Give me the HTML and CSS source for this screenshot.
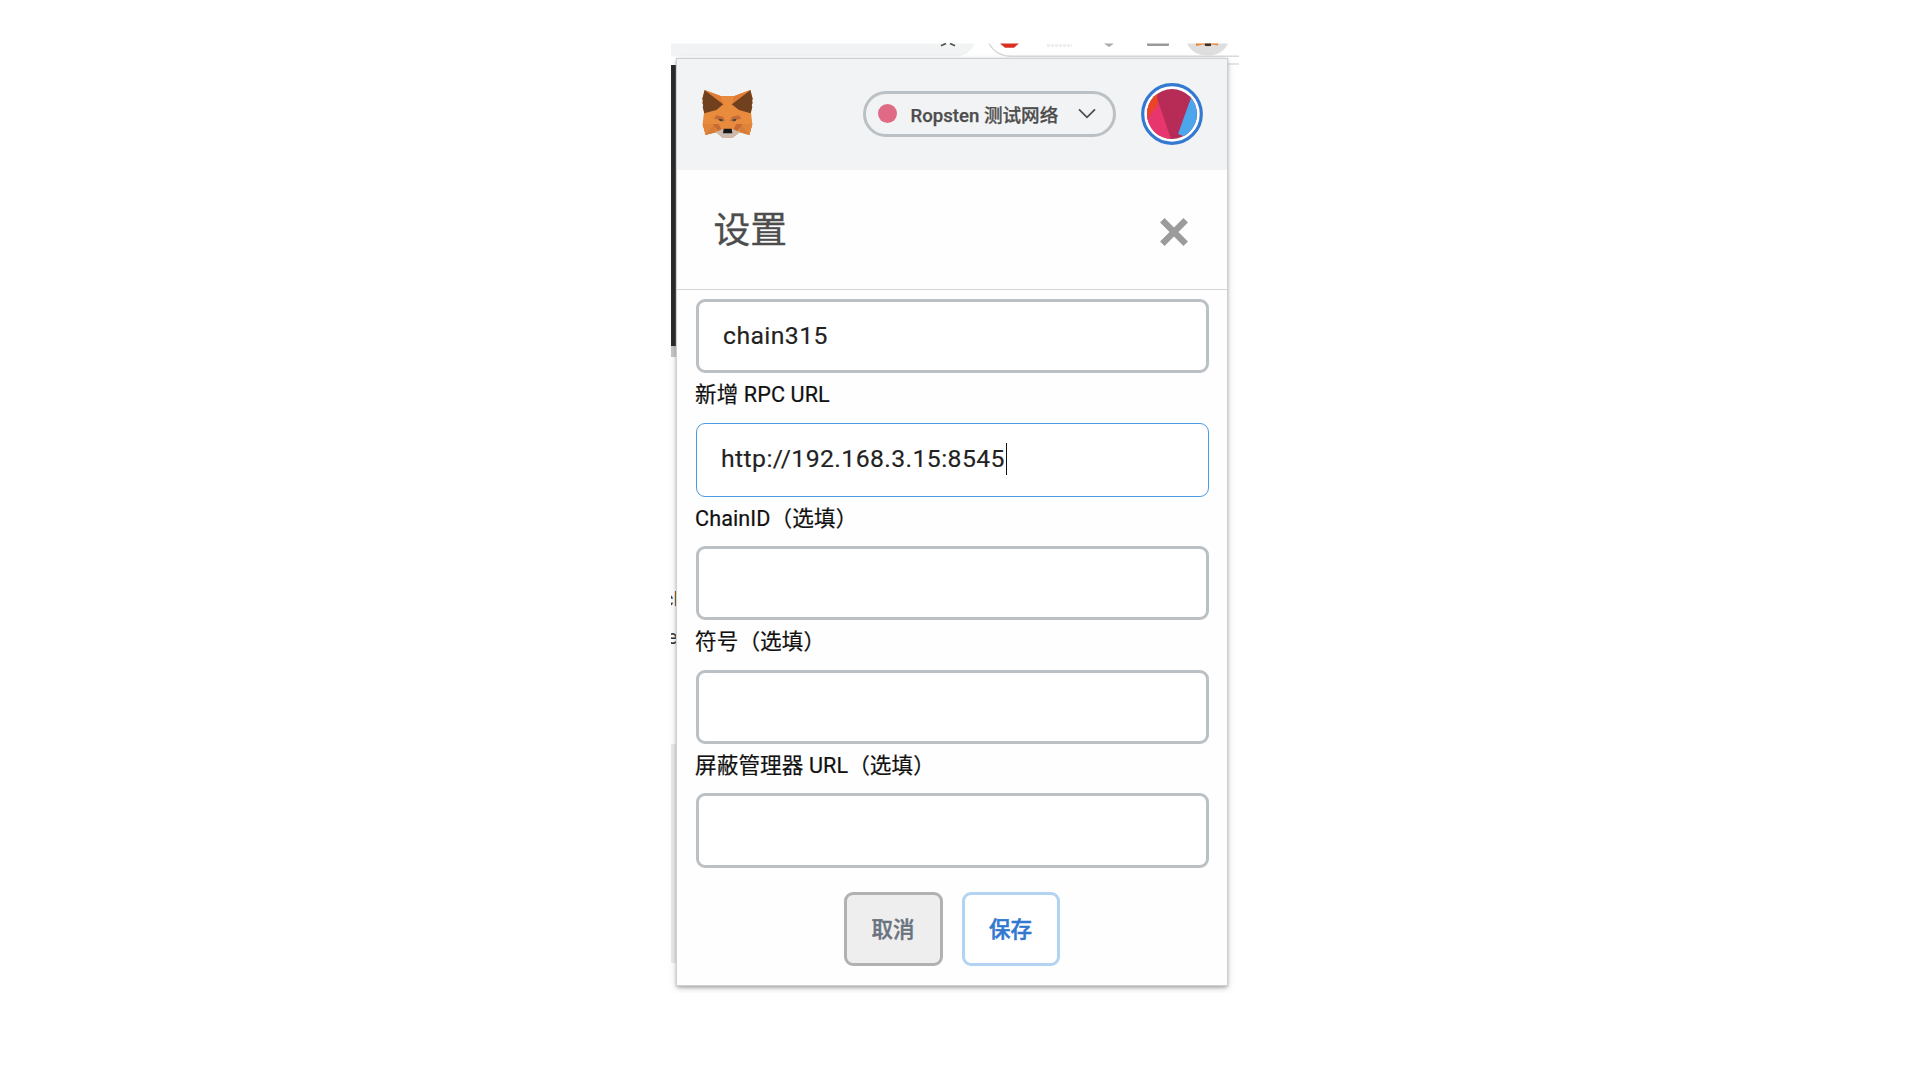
FILE: index.html
```
<!DOCTYPE html>
<html lang="zh-CN">
<head>
<meta charset="utf-8">
<title>设置</title>
<link rel="stylesheet" href="styles.css">
</head>
<body>
<div class="screen">
  <div class="backdrop" aria-hidden="true">
    <svg class="toolbar" width="568" height="22" viewBox="0 0 568 22">
      <path d="M0 .5H304Q298 13.5 283 13.5H0Z" fill="#f1f3f4"/>
      <path d="M270 2.800L275 .5M279 .5L284 2.800" stroke="#555" stroke-width="1.800"/>
      <path d="M318 .5Q325 13 340 13.300H568" fill="none" stroke="#d8d9da" stroke-width="1.500"/>
      <path d="M329 .5H348L343 4.800H334Z" fill="#d93025"/>
      <path d="M376 2.500H401" stroke="#eee" stroke-width="3" stroke-dasharray="3 1"/>
      <path d="M433 .5H443L438 4Z" fill="#aaa"/>
      <path d="M476 .5H498V2Q498 3 497 3H477Q476 3 476 2Z" fill="#999"/>
      <path d="M516 .5H557Q551 12.500 537 12.500Q522 12.500 516 .5Z" fill="#dedede"/>
      <path d="M525 .5H547V2.500L541 1.500L537 3.500L532 1.500L525 3Z" fill="#ed8936"/>
      <path d="M534 .5H540V3H534Z" fill="#333"/>
      <path d="M556 21H568" stroke="#dcdce4" stroke-width="1.500"/>
    </svg>
    <div class="page-dark"></div>
    <div class="page-fade"></div>
    <div class="page-text"><span class="line line-first">cl</span><span class="line">e</span></div>
    <div class="page-grey"></div>
  </div>

  <main class="popup">
    <header class="app-header">
      <svg class="fox" width="51" height="48" viewBox="36 31 153 144">
        <path d="M44 31L92 49H133L181 31L188 57L183 98L187 133L178 166L149 158L128 174H98L78 158L47 166L38 133L42 98L37 57Z" fill="#e88b3c"/>
        <path d="M44 31L100 74L79 91L43 101L38 82L40 77L37 70L39 63L37 57Z" fill="#70401f"/>
        <path d="M181 31L125 74L147 91L182 101L187 82L185 77L188 70L186 63L188 57Z" fill="#70401f"/>
        <path d="M44 31L92 49L100 74ZM181 31L133 49L125 74Z" fill="#df7c35"/>
        <path d="M38 133H74L78 158L47 166ZM187 133H151L149 158L178 166Z" fill="#d57c38"/>
        <path d="M38 133H74L47 166ZM187 133H151L178 166Z" fill="#e18439"/>
        <path d="M79 107L99 111L106 125L72 117ZM147 107L126 111L119 125L154 117Z" fill="#c56b38"/>
        <path d="M68 133H86L94 149L84 155ZM158 133H139L131 149L142 155Z" fill="#c76b35"/>
        <path d="M78 157L99 148H126L149 157L128 174H98Z" fill="#cbbab0"/>
        <path d="M86 117L97 119L99 125L89 124ZM139 117L129 119L127 125L137 124Z" fill="#444"/>
        <path d="M101 147H125L127 161H99Z" fill="#171717"/>
      </svg>
      <div class="network">
        <span class="network-dot"></span>
        <span class="network-name">Ropsten 测试网络</span>
        <svg class="chevron" width="18" height="11" viewBox="0 0 18 11"><path d="M1 1.300L9 9.300L17 1.300" fill="none" stroke="#4d4d4d" stroke-width="1.700"/></svg>
      </div>
      <svg class="avatar" width="62" height="62" viewBox="0 0 62 62">
        <defs><clipPath id="face"><circle cx="31" cy="31" r="25"/></clipPath></defs>
        <circle cx="31" cy="31" r="29.300" fill="#fff" stroke="#3379d2" stroke-width="3.200"/>
        <g clip-path="url(#face)">
          <path d="M0 0H62V62H0Z" fill="#b72b57"/>
          <path d="M0 0H21L15 12L32 62H0Z" fill="#e7366e"/>
          <path d="M0 0H20L16 14L17 21L0 44Z" fill="#e94524"/>
          <path d="M51 12L37 51L45 54L62 50V12Z" fill="#4da5ec"/>
        </g>
      </svg>
    </header>

    <div class="title-bar">
      <h1 class="title">设置</h1>
      <svg class="close" width="28" height="28" viewBox="0 0 28 28"><path d="M2.300 2.300L25.700 25.700M25.700 2.300L2.300 25.700" stroke="#9b9b9b" stroke-width="6.300"/></svg>
    </div>

    <section class="form">
      <div class="field">chain315</div>
      <div class="label">新增 RPC URL</div>
      <div class="field focused">http://192.168.3.15:8545<span class="caret"></span></div>
      <div class="label">ChainID（选填）</div>
      <div class="field"></div>
      <div class="label">符号（选填）</div>
      <div class="field"></div>
      <div class="label">屏蔽管理器 URL（选填）</div>
      <div class="field"></div>
      <div class="actions">
        <button class="button cancel">取消</button>
        <button class="button save">保存</button>
      </div>
    </section>
  </main>
</div>
</body>
</html>
```
FILE: styles.css
```
* { box-sizing: border-box; }
body {
  margin: 0;
  background: #fff;
  font-family: Roboto, "Noto Sans CJK SC", sans-serif;
}
.screen {
  position: relative;
  width: 568px;
  height: 950px;
  margin: 43px 0 0 671px;
  padding: 16px 0 0 5.500px;
}
.backdrop {
  position: absolute;
  inset: 0;
  display: flex;
  flex-direction: column;
}
.toolbar { flex: none; }
.page-dark { width: 6px; height: 281px; background: #2c2c2d; }
.page-fade { width: 6px; height: 11px; background: #c8c8c8; }
.page-text {
  display: flex;
  flex-direction: column;
  width: 6px;
  height: 387px;
  padding-top: 223px;
  overflow: hidden;
  color: #333;
  font-size: 20px;
  line-height: 38px;
}
.line { margin-left: -4px; }
.line-first { margin-left: -8px; }
.page-grey { width: 6px; height: 219px; background: #ebebed; }
.popup {
  position: relative;
  width: 550.500px;
  height: 926px;
  background: #fefefe;
  box-shadow: 0 0 0 1.200px #cfd0d1, 0 2px 4px rgba(0, 0, 0, .4), 0 3px 10px rgba(0, 0, 0, .12);
}
.app-header {
  display: flex;
  align-items: center;
  height: 111px;
  padding: 0 24.500px 1.500px 25.500px;
  background: #f1f3f4;
}
.network {
  display: flex;
  align-items: center;
  width: 253px;
  height: 46px;
  margin-left: auto;
  padding: 0 17px 0 12.500px;
  border: 3px solid #bbc0c5;
  border-radius: 23px;
}
.network-dot { width: 19px; height: 19px; border-radius: 50%; background: #e06a86; }
.network-name {
  margin-left: 13.500px;
  color: #4d4d4d;
  font-size: 18.600px;
  font-weight: 500;
  -webkit-text-stroke: .25px #4d4d4d;
  white-space: nowrap;
}
.chevron { margin-left: auto; }
.avatar { margin-left: 25px; }
.title-bar {
  display: flex;
  align-items: center;
  justify-content: space-between;
  height: 120px;
  padding: 4px 39.500px 0 37px;
  border-bottom: 1px solid #d3d6d9;
}
.title {
  margin: -2px 0 0;
  color: #4d4d4d;
  font-size: 36.800px;
  font-weight: 400;
  line-height: 50px;
  -webkit-text-stroke: .3px #4d4d4d;
}
.form { padding: 9px 18.500px 0 19.500px; }
.field {
  display: flex;
  align-items: center;
  height: 74.300px;
  padding: 0 0 2px 24px;
  border: 3px solid #bbc0c5;
  border-radius: 9px;
  background: #fff;
  color: #222;
  font-size: 24.800px;
  letter-spacing: .4px;
  -webkit-text-stroke: .15px #222;
}
.focused { padding-left: 24px; border: 1.500px solid #4b9be0; }
.caret { width: 1.500px; height: 32px; margin-left: 1px; background: #111; }
.label {
  height: 49.300px;
  margin-left: -1px;
  color: #111;
  font-size: 21.600px;
  line-height: 44px;
  letter-spacing: .1px;
  -webkit-text-stroke: .2px #111;
  white-space: nowrap;
}
.actions { display: flex; justify-content: center; gap: 19px; margin-top: 24.200px; }
.button {
  width: 98.700px;
  height: 74.300px;
  padding: 0 1px 3px 0;
  border: 3px solid #b0b1b2;
  border-radius: 9px;
  font-family: inherit;
  font-size: 21.500px;
  font-weight: 500;
}
.cancel { background: #eee; color: #6a737d; -webkit-text-stroke: .4px #6a737d; }
.save { border-color: #b3d3f2; background: #fff; color: #3078d0; -webkit-text-stroke: .5px #3078d0; }
```
